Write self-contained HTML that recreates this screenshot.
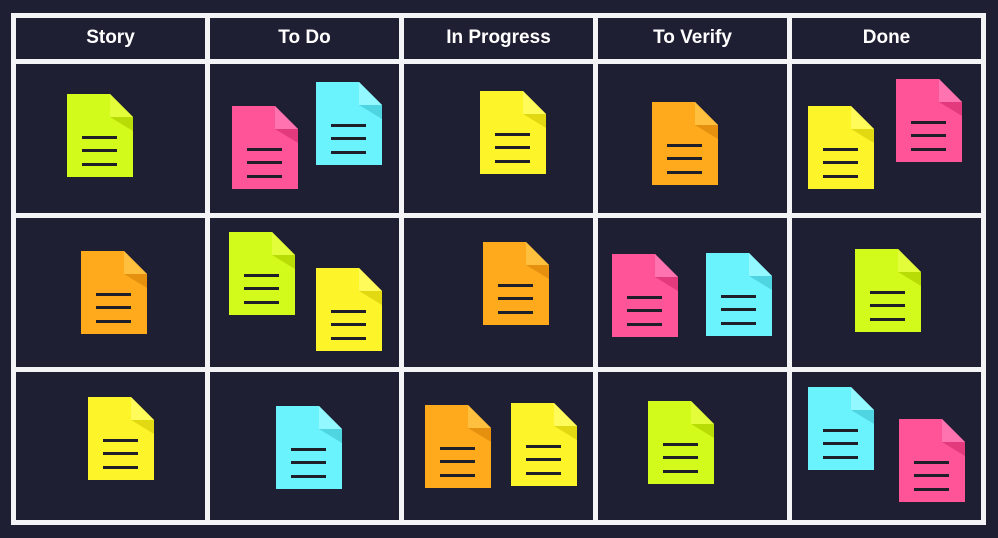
<!DOCTYPE html>
<html><head><style>
body{margin:0;width:998px;height:538px;background:#1f1f33;position:relative;overflow:hidden;font-family:"Liberation Sans",sans-serif}
.v{position:absolute;top:13px;width:5px;height:512px;background:#f4f4f6}
.h{position:absolute;left:11px;height:5px;width:975px;background:#f4f4f6}
.t{position:absolute;top:27px;height:24px;color:#fff;font-weight:bold;font-size:19px;text-align:center}
svg{position:absolute}
</style></head><body>
<div class="v" style="left:11px"></div><div class="v" style="left:205px"></div><div class="v" style="left:399px"></div><div class="v" style="left:593px"></div><div class="v" style="left:787px"></div><div class="v" style="left:981px"></div>
<div class="h" style="top:13px"></div><div class="h" style="top:59px"></div><div class="h" style="top:213px"></div><div class="h" style="top:367px"></div><div class="h" style="top:520px"></div>
<div class="t" style="left:16px;width:189px">Story</div>
<div class="t" style="left:210px;width:189px">To Do</div>
<div class="t" style="left:404px;width:189px">In Progress</div>
<div class="t" style="left:598px;width:189px">To Verify</div>
<div class="t" style="left:792px;width:189px">Done</div>
<svg width="0" height="0"><defs>
<g id="ln"><rect x="15" y="42" width="35" height="3" fill="#1f1f2a"/><rect x="15" y="55" width="35" height="3" fill="#1f1f2a"/><rect x="15" y="69" width="35" height="3" fill="#1f1f2a"/></g>
</defs></svg>
<script>
const C={l:["#d2fa1a","#e4fd3a","#b8dc05"],p:["#ff5598","#ff74b0","#e23a7c"],c:["#6bf3fd","#93f8ff","#4fd4e2"],y:["#fdf52a","#fffb5a","#e2d912"],o:["#ffaa1c","#ffc040","#e69010"]};
const N=[["l",67,94],["p",232,106],["c",316,82],["y",480,91],["o",652,102],["y",808,106],["p",896,79],
["o",81,251],["l",229,232],["y",316,268],["o",483,242],["p",612,254],["c",706,253],["l",855,249],
["y",88,397],["c",276,406],["o",425,405],["y",511,403],["l",648,401],["c",808,387],["p",899,419]];
let h="";for(const[k,x,y]of N){const c=C[k];h+=`<svg style="left:${x}px;top:${y}px" width="66" height="83" viewBox="0 0 66 83"><path d="M0 0H43L66 23V83H0Z" fill="${c[0]}"/><path d="M43 0L66 23H43Z" fill="${c[1]}"/><path d="M43 23H66V37Z" fill="${c[2]}"/><use href="#ln"/></svg>`;}
document.body.insertAdjacentHTML("beforeend",h);
</script>
</body></html>
